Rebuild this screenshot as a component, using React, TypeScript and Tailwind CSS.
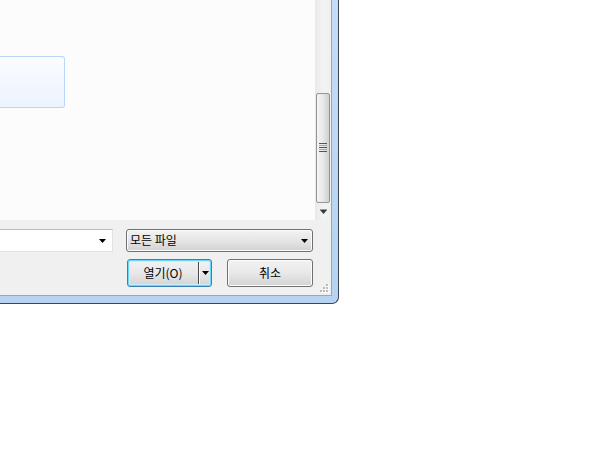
import React from "react";

const font = { fontFamily: '"Noto Sans CJK KR", "Noto Sans", sans-serif' };

function Tri({ className = "" }: { className?: string }) {
  return (
    <svg width="7" height="4" viewBox="0 0 7 4" className={className}>
      <path d="M0 0 H7 L3.5 4 Z" fill="#000" />
    </svg>
  );
}

export default function App() {
  return (
    <div className="relative w-[600px] h-[453px] bg-white overflow-hidden" style={font}>
      {/* dialog window */}
      <div className="absolute left-0 top-0 w-[339px] h-[304px] border-r border-b border-[#3a4656] rounded-br-[7px] bg-gradient-to-b from-[#c4dcf5] to-[#b7d3f1] pr-[6px] pb-[7px]">
        <div className="w-full h-full flex flex-col border-r border-b border-[#94a8bd] bg-[#f0f0f0]">
          {/* top: content + scrollbar */}
          <div className="flex h-[220px]">
            <div className="flex-1 bg-[#fcfcfc] pt-[56px]">
              <div className="w-[65px] h-[52px] border border-l-0 border-[#b9d7fc] rounded-r-[3px] bg-gradient-to-b from-[#fbfcfe] to-[#ebf4fe]" />
            </div>
            <div className="w-[16px] flex flex-col bg-gradient-to-r from-[#e9e9e9] via-[#f3f3f3] to-[#f0f0f0]">
              <div className="h-[93px]" />
              <div className="h-[110px] mx-px rounded-[2px] border border-[#959595] bg-gradient-to-r from-[#f4f4f4] via-[#e8e8e8] to-[#cfcfcf] flex items-center justify-center">
                <div className="flex flex-col gap-[1px] mt-[-2px]">
                  <div className="w-[8px] h-[1px] bg-[#555]" />
                  <div className="w-[8px] h-[1px] bg-[#aaa]" />
                  <div className="w-[8px] h-[1px] bg-[#555]" />
                  <div className="w-[8px] h-[1px] bg-[#aaa]" />
                  <div className="w-[8px] h-[1px] bg-[#555]" />
                </div>
              </div>
              <div className="flex-1 flex items-center justify-center">
                <svg width="7" height="5" viewBox="0 0 7 5">
                  <rect x="0" y="0" width="7" height="1" fill="#9a9a9a" />
                  <path d="M0 1 H7 L3.5 5 Z" fill="#3a3a3a" />
                </svg>
              </div>
            </div>
          </div>

          {/* bottom panel */}
          <div className="relative flex-1 flex flex-col pt-[9px] gap-[7px] text-[12px] text-black">
            <div className="flex items-center pr-[18px]">
              <div className="flex-1 h-[23px] bg-white border border-l-0 border-[#dfe3e9] border-t-[#b7bbc2] flex items-center justify-end pr-[6px]">
                <Tri />
              </div>
              <div className="ml-[13px] w-[187px] h-[23px] rounded-[3px] border border-[#707070] bg-gradient-to-b from-[#f2f2f2] via-[#e6e6e6] to-[#d2d2d2] flex items-center justify-between pl-[3px] pr-[4px] shadow-[inset_0_0_0_1px_#fcfcfc]">
                <span className="leading-none pb-[1px]">모든 파일</span>
                <Tri />
              </div>
            </div>
            <div className="flex items-center justify-end pr-[18px] gap-[15px]">
              <div className="w-[85px] h-[28px] rounded-[3px] border border-[#3c7fb1] bg-gradient-to-b from-[#f2f2f2] via-[#e8e8e8] to-[#d3d3d3] shadow-[inset_0_0_0_1px_#6bd6fb,inset_0_0_0_2px_#c7eefc] flex items-center">
                <div className="w-[70px] text-center leading-none">열기(O)</div>
                <div className="w-[1px] h-[22px] bg-[#4a4a4a]" />
                <div className="w-[1px] h-[22px] bg-[#fafafa]" />
                <div className="flex-1 flex justify-center pr-[1px]">
                  <Tri />
                </div>
              </div>
              <div className="w-[86px] h-[28px] rounded-[3px] border border-[#707070] bg-gradient-to-b from-[#f2f2f2] via-[#e8e8e8] to-[#d3d3d3] shadow-[inset_0_0_0_1px_#fcfcfc] flex items-center justify-center">
                <span className="leading-none">취소</span>
              </div>
            </div>
            {/* size grip */}
            <svg className="absolute right-[2px] bottom-[2px]" width="9" height="9" viewBox="0 0 9 9">
              {[
                [6, 0],
                [3, 3],
                [6, 3],
                [0, 6],
                [3, 6],
                [6, 6],
              ].map(([x, y], i) => (
                <g key={i}>
                  <rect x={x + 1} y={y + 1} width="2" height="2" fill="#ffffff" />
                  <rect x={x} y={y} width="2" height="2" fill="#b8bcc2" />
                </g>
              ))}
            </svg>
          </div>
        </div>
      </div>
    </div>
  );
}
